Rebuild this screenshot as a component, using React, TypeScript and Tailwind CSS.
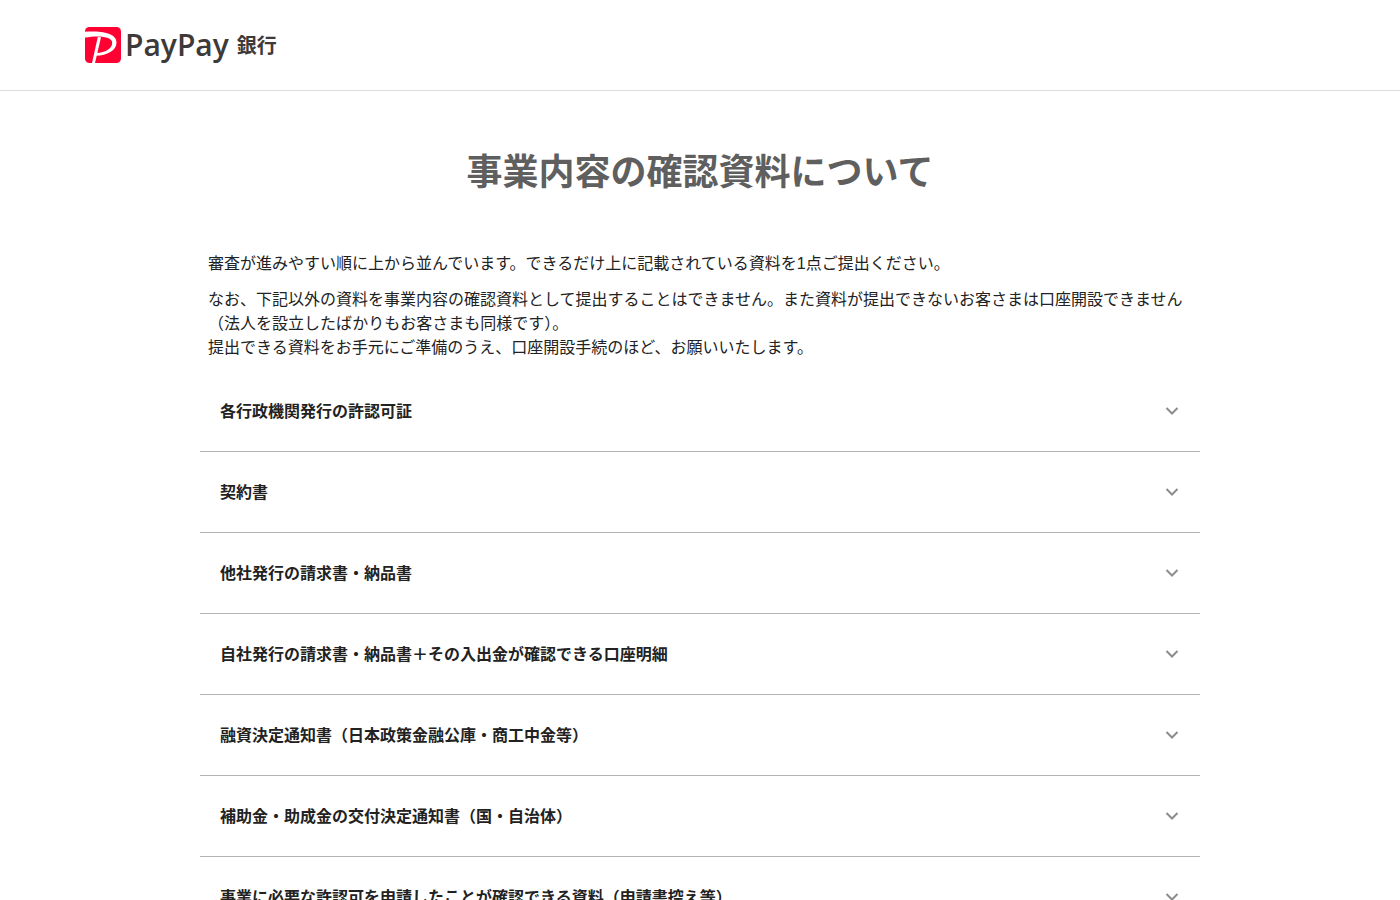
import React, { useState } from 'react'

const items = [
  '各行政機関発行の許認可証',
  '契約書',
  '他社発行の請求書・納品書',
  '自社発行の請求書・納品書＋その入出金が確認できる口座明細',
  '融資決定通知書（日本政策金融公庫・商工中金等）',
  '補助金・助成金の交付決定通知書（国・自治体）',
  '事業に必要な許認可を申請したことが確認できる資料（申請書控え等）',
]

function Logo() {
  return (
    <a href="#" aria-label="PayPay銀行" className="inline-flex h-9 items-center text-[#3e3a39]">
      <svg viewBox="0 0 36 36" className="h-9 w-9 shrink-0" aria-hidden="true">
        <rect width="36" height="36" rx="4.5" fill="#ff0033" />
        <path
          d="M0 4.8C15 4 31.5 5.5 31.5 15.6C31.5 23.8 22 28.6 11 28.8L11.8 26C20 25.6 27.2 22 27.2 15.8C27.2 10 15 8 0 10.6Z"
          fill="#fff"
        />
        <path d="M12.8 10L16 10.2L10 36H7Z" fill="#fff" />
      </svg>
      <span className="ml-1 font-['Open_Sans',sans-serif] text-[30px] leading-9 font-semibold">PayPay</span>
      <span className="ml-2 pt-0.5 text-xl leading-9 font-bold">銀行</span>
    </a>
  )
}

function AccordionItem({ title }: { title: string }) {
  const [open, setOpen] = useState(false)

  return (
    <li className="border-b border-[#b4b4b4]">
      <button
        type="button"
        aria-expanded={open}
        onClick={() => setOpen(!open)}
        className="flex w-full cursor-pointer items-center justify-between px-5 pt-[29px] pb-[27px] text-left text-base leading-6 font-bold"
      >
        {title}
        <svg
          viewBox="0 0 16 16"
          className={open ? 'h-4 w-4 shrink-0 rotate-180' : 'h-4 w-4 shrink-0'}
          fill="none"
          stroke="#8c8c8c"
          strokeWidth="2"
          aria-hidden="true"
        >
          <path d="M2.5 4L8 9.5L13.5 4" />
        </svg>
      </button>
    </li>
  )
}

export default function App() {
  return (
    <div className="bg-white font-['Liberation_Sans','Noto_Sans_CJK_JP',sans-serif] text-[#222]" lang="ja">
      <header className="border-b border-[#dcdcdc]">
        <div className="mx-auto flex h-[90px] max-w-[1230px] items-center">
          <Logo />
        </div>
      </header>

      <main className="mx-auto max-w-[1000px]">
        <h1 className="pt-[55px] text-center text-4xl leading-[54px] font-bold text-[#5f5f5f]">
          事業内容の確認資料について
        </h1>

        <div className="mt-[52px] space-y-3 px-2 text-base leading-6">
          <p>審査が進みやすい順に上から並んでいます。できるだけ上に記載されている資料を1点ご提出ください。</p>
          <p>
            なお、下記以外の資料を事業内容の確認資料として提出することはできません。また資料が提出できないお客さまは口座開設できません（法人を設立したばかりもお客さまも同様です）。
            <br />
            提出できる資料をお手元にご準備のうえ、口座開設手続のほど、お願いいたします。
          </p>
        </div>

        <ul className="mt-[11px]">
          {items.map((title) => (
            <AccordionItem key={title} title={title} />
          ))}
        </ul>
      </main>
    </div>
  )
}
